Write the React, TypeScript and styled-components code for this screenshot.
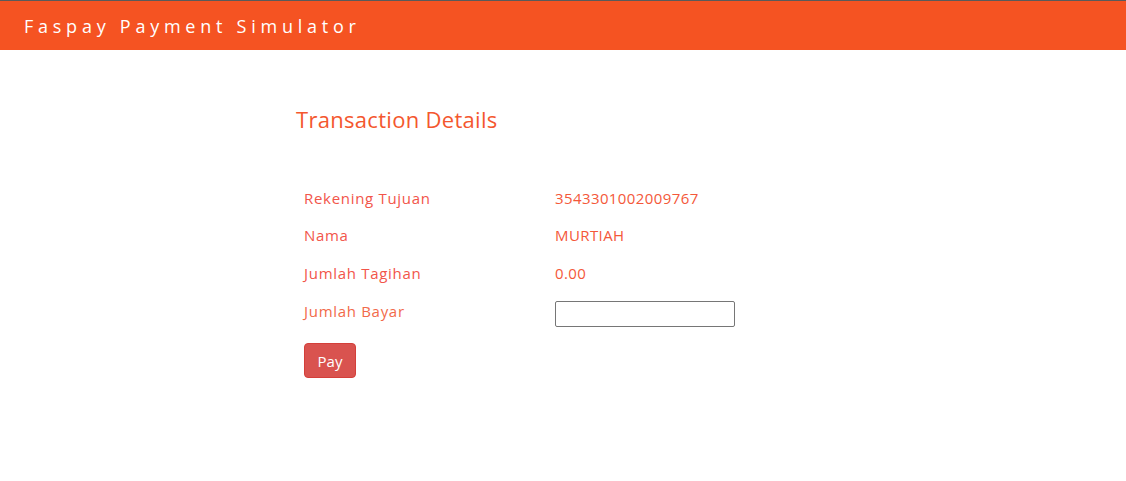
import { Fragment } from "react";
import styled, { createGlobalStyle } from "styled-components";

const GlobalStyle = createGlobalStyle`
  body {
    margin: 0;
    background: #ffffff;
    font-family: "Open Sans", "Liberation Sans", sans-serif;
  }
`;

const Header = styled.header`
  height: 49px;
  border-top: 1px solid #5a5a5a;
  background-color: #f55322;
  display: flex;
  align-items: center;
  padding-left: 24px;
`;

const Brand = styled.h1`
  margin: 0;
  color: #ffffff;
  font-size: 18px;
  font-weight: 400;
  letter-spacing: 4.75px;
`;

const Main = styled.main`
  width: 534px;
  margin: 0 auto;
  padding-top: 54px;
`;

const Title = styled.h2`
  margin: 0 0 45px;
  color: #f4572e;
  font-size: 22px;
  font-weight: 400;
  line-height: 30px;
  letter-spacing: 0.3px;
`;

const Table = styled.div`
  display: grid;
  grid-template-columns: 251px 1fr;
  grid-auto-rows: 37.5px;
  padding-left: 8px;
  align-items: center;
`;

const Label = styled.div<{ $field?: boolean }>`
  color: ${(p) => (p.$field ? "#f26a4a" : "#f2554a")};
  font-size: 15px;
  letter-spacing: 0.7px;
  align-self: ${(p) => (p.$field ? "start" : "center")};
  padding-top: ${(p) => (p.$field ? "9px" : "0")};
`;

const Value = styled.div`
  color: #f4583a;
  font-size: 15px;
  letter-spacing: 0.4px;
`;

const AmountInput = styled.input`
  width: 180px;
  height: 26px;
  box-sizing: border-box;
  border: 1px solid #767676;
  border-radius: 2px;
  margin-top: 9px;
  align-self: start;
`;

const PayButton = styled.button`
  margin: 14px 0 0 8px;
  width: 52px;
  height: 35px;
  background-color: #d9534f;
  border: 1px solid #d43f3a;
  border-radius: 4px;
  color: #ffffff;
  font-family: "Open Sans", "Liberation Sans", sans-serif;
  font-size: 15px;
  padding: 0;
`;

const rows = [
  { label: "Rekening Tujuan", value: "3543301002009767" },
  { label: "Nama", value: "MURTIAH" },
  { label: "Jumlah Tagihan", value: "0.00" },
];

export default function App() {
  return (
    <>
      <GlobalStyle />
      <Header>
        <Brand>Faspay Payment Simulator</Brand>
      </Header>
      <Main>
        <Title>Transaction Details</Title>
        <Table>
          {rows.map((r) => (
            <Fragment key={r.label}>
              <Label>{r.label}</Label>
              <Value>{r.value}</Value>
            </Fragment>
          ))}
          <Label $field>Jumlah Bayar</Label>
          <AmountInput type="text" />
        </Table>
        <PayButton>Pay</PayButton>
      </Main>
    </>
  );
}
